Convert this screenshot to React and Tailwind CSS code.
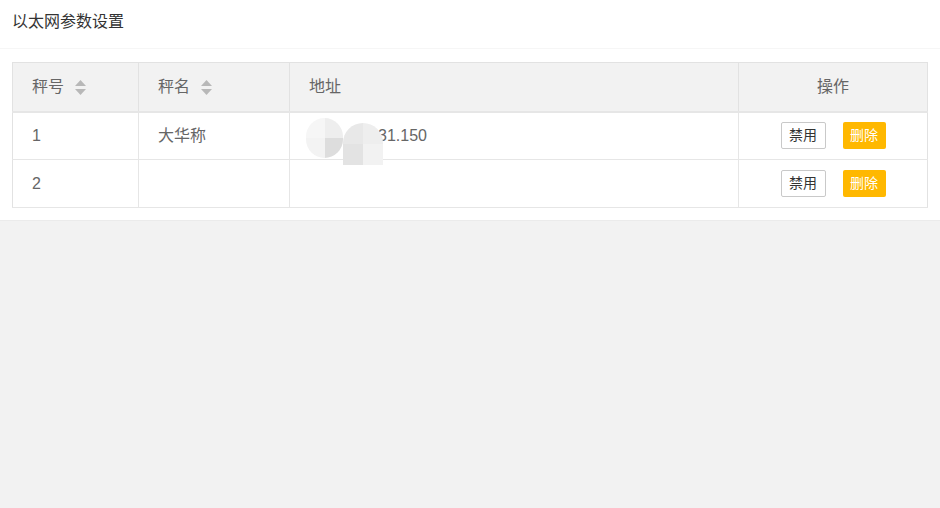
import React from 'react';

function SortIcon() {
  return (
    <svg width="13" height="16" viewBox="0 0 13 16" className="ml-[10px]">
      <path d="M6.5 1 L12 7 H1 Z" fill="#b8b8b8" />
      <path d="M6.5 16 L12 10 H1 Z" fill="#b8b8b8" />
    </svg>
  );
}

function Mosaic() {
  return (
    <div className="absolute left-[16px] top-[5px] w-[80px] h-[48px] pointer-events-none blur-[0.6px]">
      <div className="absolute left-0 top-0 w-[37px] h-[40px] rounded-full overflow-hidden grid grid-cols-2 grid-rows-2">
        <div className="bg-[#f6f6f6]" />
        <div className="bg-[#eeeeee]" />
        <div className="bg-[#f3f3f3]" />
        <div className="bg-[#dddddd]" />
      </div>
      <div className="absolute left-[37px] top-[5px] w-[40px] h-[42px] rounded-t-full overflow-hidden grid grid-cols-2 grid-rows-2">
        <div className="bg-[#e8e8e8]" />
        <div className="bg-[#eeeeee]" />
        <div className="bg-[#e3e3e3]" />
        <div className="bg-[#f2f2f2]" />
      </div>
    </div>
  );
}

const rows = [
  { id: '1', name: '大华称', addr: '31.150' },
  { id: '2', name: '', addr: '' },
];

export default function App() {
  return (
    <div className="min-h-screen bg-[#f2f2f2] text-[#666]" style={{ fontFamily: '"Liberation Sans", "Noto Sans CJK SC", sans-serif' }}>
      <div className="bg-white pb-[12px] border-b border-[#ebebeb]">
        <div className="h-[49px] px-[12px] flex items-center text-[16px] text-[#333] border-b border-[#f6f6f6] pb-[4px]">
          以太网参数设置
        </div>
        <div className="px-[12px] pt-[13px]">
          <table className="w-full border-collapse border border-[#e2e2e2] text-[16px] table-fixed">
            <colgroup>
              <col className="w-[126px]" />
              <col className="w-[151px]" />
              <col className="w-[449px]" />
              <col />
            </colgroup>
            <thead>
              <tr className="bg-[#f2f2f2] h-[49px] border-b-2 border-[#e6e6e6]">
                <th className="font-normal text-left px-[19px] border-r border-[#e2e2e2]">
                  <div className="flex items-center">秤号<SortIcon /></div>
                </th>
                <th className="font-normal text-left px-[19px] border-r border-[#e2e2e2]">
                  <div className="flex items-center">秤名<SortIcon /></div>
                </th>
                <th className="font-normal text-left px-[19px] border-r border-[#e2e2e2]">地址</th>
                <th className="font-normal text-center px-[19px]">操作</th>
              </tr>
            </thead>
            <tbody>
              {rows.map((r) => (
                <tr key={r.id} className="h-[48px] border-b border-[#e6e6e6]">
                  <td className="px-[19px] border-r border-[#e6e6e6]">{r.id}</td>
                  <td className="px-[19px] border-r border-[#e6e6e6]">{r.name}</td>
                  <td className="px-[19px] border-r border-[#e6e6e6] relative">
                    {r.addr && (
                      <>
                        <span className="pl-[69px]">{r.addr}</span>
                        <Mosaic />
                      </>
                    )}
                  </td>
                  <td className="px-[19px]">
                    <div className="flex items-center justify-center gap-[17px]">
                      <button className="h-[27px] w-[45px] border border-[#c9c9c9] rounded-[2px] bg-white text-[14px] text-[#333]">禁用</button>
                      <button className="h-[27px] w-[43px] rounded-[2px] bg-[#FFB800] text-[14px] text-white">删除</button>
                    </div>
                  </td>
                </tr>
              ))}
            </tbody>
          </table>
        </div>
      </div>
    </div>
  );
}
